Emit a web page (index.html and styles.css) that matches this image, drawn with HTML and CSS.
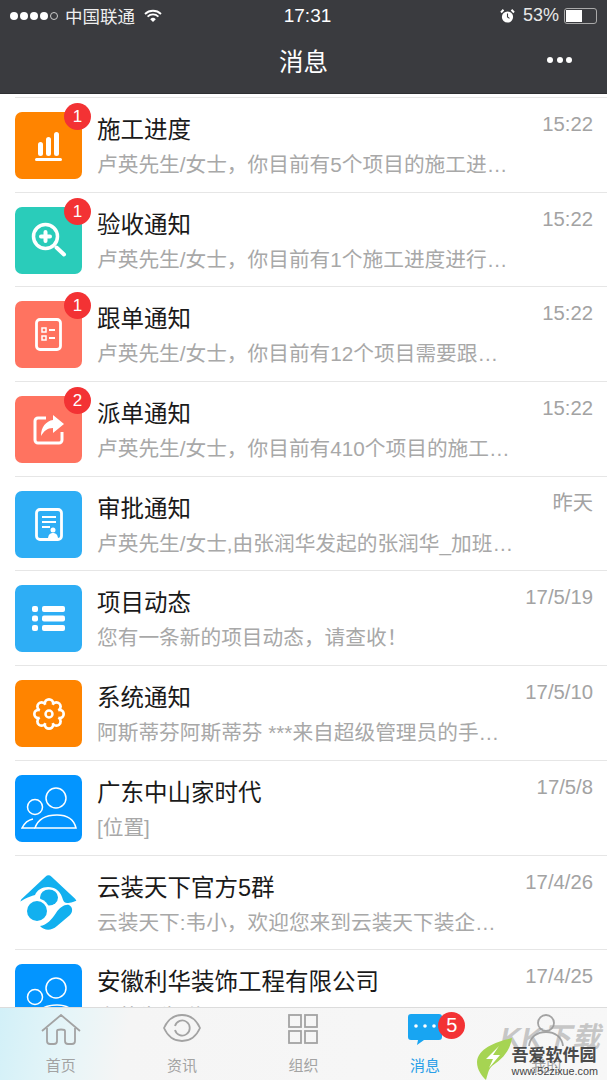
FILE: index.html
```html
<!DOCTYPE html>
<html lang="zh">
<head>
<meta charset="UTF-8">
<meta name="viewport" content="width=device-width, initial-scale=1.0">
<title>消息</title>
<link rel="stylesheet" href="styles.css">
</head>
<body>
<div class="app">
  <div class="top">
    <div class="status">
      <div class="status-left">
        <span class="signal"><i></i><i></i><i></i><i></i><i class="off"></i></span>
        <span class="carrier">中国联通</span>
        <svg class="wifi" width="18" height="14" viewBox="0 0 18 14"><path d="M1 5a11.500 11.500 0 0 1 16 0" fill="none" stroke="#fff" stroke-width="1.800"/><path d="M3.600 7.600a7.800 7.800 0 0 1 10.800 0" fill="none" stroke="#fff" stroke-width="1.800"/><path d="M6.200 10.200a4 4 0 0 1 5.600 0L9 13z" fill="#fff"/></svg>
      </div>
      <div class="clock">17:31</div>
      <div class="status-right">
        <svg width="15" height="16" viewBox="0 0 15 16"><circle cx="7.500" cy="9" r="5.600" fill="#fff"/><path d="M7.500 5.500V9l2 1.400" fill="none" stroke="#3a3b3f" stroke-width="1.100"/><path d="M1 4.500 3.500 1.800M14 4.500l-2.500-2.700" stroke="#fff" stroke-width="2"/></svg>
        <span class="pct">53%</span>
        <span class="battery"><span class="battery-fill"></span></span>
      </div>
    </div>
    <div class="nav">
      <span class="nav-title">消息</span>
      <span class="nav-more"><i></i><i></i><i></i></span>
    </div>
  </div>
  <div class="list">
    <div class="row">
      <div class="thumb orange">
        <svg width="28" height="30" viewBox="0 0 28 30" fill="#fff"><rect x="3" y="11" width="5" height="14" rx="2.500"/><rect x="11" y="6" width="5" height="19" rx="2.500"/><rect x="19" y="1" width="5" height="24" rx="2.500"/><rect x="0" y="27" width="27" height="3" rx="1.500"/></svg>
        <span class="badge">1</span>
      </div>
      <div class="body">
        <div class="line"><span class="name">施工进度</span><span class="time">15:22</span></div>
        <div class="desc">卢英先生/女士，你目前有5个项目的施工进…</div>
      </div>
    </div>
    <div class="row">
      <div class="thumb teal">
        <svg width="36" height="36" viewBox="0 0 36 36" fill="none" stroke="#fff" stroke-linecap="round"><circle cx="14.500" cy="14.500" r="12" stroke-width="3.500"/><path d="M25.500 25.500l7.500 7" stroke-width="4"/><path d="M14.500 10v9M10 14.500h9" stroke-width="4"/></svg>
        <span class="badge">1</span>
      </div>
      <div class="body">
        <div class="line"><span class="name">验收通知</span><span class="time">15:22</span></div>
        <div class="desc">卢英先生/女士，你目前有1个施工进度进行…</div>
      </div>
    </div>
    <div class="row">
      <div class="thumb coral">
        <svg width="27" height="33" viewBox="0 0 27 33" fill="none" stroke="#fff"><rect x="1.500" y="1.500" width="24" height="30" rx="3.500" stroke-width="2.800"/><rect x="7" y="10" width="4" height="4" stroke-width="1.500"/><rect x="7" y="18" width="4" height="4" stroke-width="1.500"/><path d="M14 12h6M14 20h6" stroke-width="1.800"/></svg>
        <span class="badge">1</span>
      </div>
      <div class="body">
        <div class="line"><span class="name">跟单通知</span><span class="time">15:22</span></div>
        <div class="desc">卢英先生/女士，你目前有12个项目需要跟…</div>
      </div>
    </div>
    <div class="row">
      <div class="thumb coral">
        <svg width="32" height="31" viewBox="0 0 32 31"><path d="M13 4H5a3 3 0 0 0-3 3v19a3 3 0 0 0 3 3h21a3 3 0 0 0 3-3v-8" fill="none" stroke="#fff" stroke-width="3"/><path d="M20 1l11 9-11 9v-5c-6 0-9 3-12 8 0-9 5-15 12-16z" fill="#fff"/></svg>
        <span class="badge">2</span>
      </div>
      <div class="body">
        <div class="line"><span class="name">派单通知</span><span class="time">15:22</span></div>
        <div class="desc">卢英先生/女士，你目前有410个项目的施工…</div>
      </div>
    </div>
    <div class="row">
      <div class="thumb sky">
        <svg width="28" height="33" viewBox="0 0 28 33" fill="none" stroke="#fff"><rect x="1.500" y="1.500" width="25" height="30" rx="3.500" stroke-width="2.800"/><path d="M7 9h14M7 14h14M7 19h8" stroke-width="1.800"/><circle cx="18" cy="22" r="2.500" fill="#fff" stroke="none"/><path d="M13 31c0-4 2-6 5-6s5 2 5 6z" fill="#fff" stroke="none"/></svg>
      </div>
      <div class="body">
        <div class="line"><span class="name">审批通知</span><span class="time">昨天</span></div>
        <div class="desc">卢英先生/女士,由张润华发起的张润华_加班…</div>
      </div>
    </div>
    <div class="row">
      <div class="thumb sky">
        <svg width="33" height="25" viewBox="0 0 33 25" fill="#fff"><rect x="0" y="0" width="6" height="6" rx="2"/><rect x="0" y="9.500" width="6" height="6" rx="2"/><rect x="0" y="19" width="6" height="6" rx="2"/><rect x="10" y="0" width="23" height="6" rx="2"/><rect x="10" y="9.500" width="23" height="6" rx="2"/><rect x="10" y="19" width="23" height="6" rx="2"/></svg>
      </div>
      <div class="body">
        <div class="line"><span class="name">项目动态</span><span class="time">17/5/19</span></div>
        <div class="desc">您有一条新的项目动态，请查收！</div>
      </div>
    </div>
    <div class="row">
      <div class="thumb orange">
        <svg width="32" height="32" viewBox="0 0 32 32">
          <g fill="#fff"><circle cx="16" cy="16" r="11"/><circle cx="16" cy="5.500" r="5.500"/><circle cx="23.400" cy="8.600" r="5.500"/><circle cx="26.500" cy="16" r="5.500"/><circle cx="23.400" cy="23.400" r="5.500"/><circle cx="16" cy="26.500" r="5.500"/><circle cx="8.600" cy="23.400" r="5.500"/><circle cx="5.500" cy="16" r="5.500"/><circle cx="8.600" cy="8.600" r="5.500"/></g>
          <g fill="#ff8400"><circle cx="16" cy="16" r="10"/><circle cx="16" cy="5.500" r="2.800"/><circle cx="23.400" cy="8.600" r="2.800"/><circle cx="26.500" cy="16" r="2.800"/><circle cx="23.400" cy="23.400" r="2.800"/><circle cx="16" cy="26.500" r="2.800"/><circle cx="8.600" cy="23.400" r="2.800"/><circle cx="5.500" cy="16" r="2.800"/><circle cx="8.600" cy="8.600" r="2.800"/></g>
          <circle cx="16" cy="16" r="3.500" fill="none" stroke="#fff" stroke-width="2.500"/>
        </svg>
      </div>
      <div class="body">
        <div class="line"><span class="name">系统通知</span><span class="time">17/5/10</span></div>
        <div class="desc">阿斯蒂芬阿斯蒂芬 ***来自超级管理员的手…</div>
      </div>
    </div>
    <div class="row">
      <div class="thumb blue">
        <svg width="56" height="42" viewBox="0 0 56 42" fill="none" stroke="#fff" stroke-width="1.500"><circle cx="35" cy="11" r="10"/><circle cx="14" cy="20" r="7.500"/><path d="M14 41c3-9 11-13 22-13s17 5 19 13z"/><path d="M12 32c-5 1-9 5-11 9h13"/></svg>
      </div>
      <div class="body">
        <div class="line"><span class="name">广东中山家时代</span><span class="time">17/5/8</span></div>
        <div class="desc">[位置]</div>
      </div>
    </div>
    <div class="row">
      <div class="thumb logo">
        <svg width="67" height="67" viewBox="0 0 67 67">
          <path d="M33.500 10 57 32 33.500 55 10 32z" fill="#12b0ef" stroke="#12b0ef" stroke-width="9" stroke-linejoin="round"/>
          <path d="M0 36C6 30 13 27 20 25 22 20 27 17 33 17 40 17 45 21 47 27 48 30 49 33 52 33 55 33 60 32 67 28V67H0z" fill="#fff"/>
          <ellipse cx="34" cy="27.500" rx="9" ry="8" fill="#12b0ef"/>
          <circle cx="22" cy="41" r="12.500" fill="#fff"/>
          <path d="M24 57C32 55 37 49 40 44 42 41 44 38 47 34L60 36V48H30z" fill="#fff"/>
          <circle cx="22" cy="41" r="10" fill="#12b0ef"/>
          <path d="M25 56C32 55 37 49 41 43 45 37 50 34 54 35 58 37 58 42 55 45L42 56C36 61 30 61 25 56z" fill="#12b0ef"/>
        </svg>
      </div>
      <div class="body">
        <div class="line"><span class="name">云装天下官方5群</span><span class="time">17/4/26</span></div>
        <div class="desc">云装天下:韦小，欢迎您来到云装天下装企…</div>
      </div>
    </div>
    <div class="row">
      <div class="thumb blue">
        <svg width="56" height="42" viewBox="0 0 56 42" fill="none" stroke="#fff" stroke-width="1.500"><circle cx="35" cy="11" r="10"/><circle cx="14" cy="20" r="7.500"/><path d="M14 41c3-9 11-13 22-13s17 5 19 13z"/><path d="M12 32c-5 1-9 5-11 9h13"/></svg>
      </div>
      <div class="body">
        <div class="line"><span class="name">安徽利华装饰工程有限公司</span><span class="time">17/4/25</span></div>
        <div class="desc">卢英先生[位置]</div>
      </div>
    </div>
  </div>
  <div class="tabs">
    <div class="tab">
      <svg width="40" height="32" viewBox="0 0 40 32" fill="none" stroke="#a3a3a3" stroke-width="1.800"><path d="M1 17 20 1l19 16"/><path d="M6 14v13c0 2 1 3 3 3h4c2 0 3-1 3-3V17c0-2 8-2 8 0v10c0 2 1 3 3 3h4c2 0 3-1 3-3V14"/></svg>
      <span>首页</span>
    </div>
    <div class="tab">
      <svg width="38" height="28" viewBox="0 0 38 28" fill="none" stroke="#a3a3a3" stroke-width="1.800"><path d="M1 14C5 5 12 1 19 1s14 4 18 13c-4 9-11 13-18 13S5 23 1 14z"/><path d="M12 12a7.500 7.500 0 1 1 0 4"/></svg>
      <span>资讯</span>
    </div>
    <div class="tab">
      <svg width="30" height="30" viewBox="0 0 30 30" fill="none" stroke="#a3a3a3" stroke-width="1.800"><rect x="1" y="1" width="12" height="12"/><rect x="17" y="1" width="12" height="12"/><rect x="1" y="17" width="12" height="12"/><rect x="17" y="17" width="12" height="12"/></svg>
      <span>组织</span>
    </div>
    <div class="tab active">
      <svg width="34" height="31" viewBox="0 0 34 31"><path d="M3 0h28a3 3 0 0 1 3 3v20a3 3 0 0 1-3 3H16l-7 5 1-5H3a3 3 0 0 1-3-3V3a3 3 0 0 1 3-3z" fill="#18a5f2"/><circle cx="8" cy="12" r="1.800" fill="#fff"/><circle cx="17" cy="12" r="1.800" fill="#fff"/><circle cx="26" cy="12" r="1.800" fill="#fff"/></svg>
      <span>消息</span>
      <em class="tab-badge">5</em>
    </div>
    <div class="tab">
      <svg width="38" height="32" viewBox="0 0 38 32" fill="none" stroke="#a3a3a3" stroke-width="1.800"><circle cx="19" cy="9" r="8"/><path d="M2 32c1-9 8-14 17-14s16 5 17 14"/></svg>
      <span>我的</span>
    </div>
  </div>
  <span class="mark-back">KK下载</span>
  <div class="mark">
    <svg class="mark-leaf" width="36" height="42" viewBox="0 0 36 42"><path d="M36 0C20 4 2 10 1 24c0 8 5 14 9 18 2-6 2-10 6-14C28 20 34 12 36 0z" fill="#a6d452"/><path d="M23 8 10 21h7l-4 9 11-13h-7z" fill="#fff"/></svg>
    <div class="mark-text">
      <b>吾爱软件园</b>
      <span>www.52zixue.com</span>
    </div>
  </div>
</div>
</body>
</html>
```

FILE: styles.css
```css
* {
  box-sizing: border-box;
}
html, body {
  margin: 0;
  padding: 0;
}
body {
  font-family: "Liberation Sans", "Noto Sans CJK SC", sans-serif;
  background-color: #fff;
}
.app {
  position: relative;
  width: 607px;
  height: 1080px;
  display: flex;
  flex-direction: column;
  overflow: hidden;
}

/* top bar */
.top {
  height: 94px;
  flex: none;
  background-color: #3a3b3f;
  color: #fff;
  border-bottom: 1px solid #2e2f32;
}
.status {
  height: 31px;
  display: grid;
  grid-template-columns: 1fr auto 1fr;
  align-items: center;
  padding: 0 9px 0 10px;
}
.status-left {
  display: flex;
  align-items: center;
}
.signal {
  display: flex;
  gap: 2px;
  margin-right: 7px;
}
.signal i {
  width: 8px;
  height: 8px;
  border-radius: 50%;
  background-color: #fff;
}
.signal i.off {
  background: none;
  border: 1px solid #ccc;
}
.carrier {
  font-size: 17.500px;
  color: #eee;
}
.wifi {
  margin-left: 9px;
}
.clock {
  font-size: 19px;
  margin-left: 7px;
}
.status-right {
  display: flex;
  align-items: center;
  justify-content: flex-end;
}
.pct {
  font-size: 18px;
  margin-left: 8px;
  margin-right: 5px;
  color: #e8e8e8;
}
.battery {
  width: 33px;
  height: 16px;
  border: 1px solid #aaa;
  border-radius: 3px;
  padding: 1px;
  margin-right: 1px;
}
.battery-fill {
  display: block;
  width: 55%;
  height: 100%;
  background-color: #fff;
}
.nav {
  position: relative;
  height: 62px;
  display: flex;
  align-items: center;
  justify-content: center;
}
.nav-title {
  font-size: 24.500px;
  margin-top: -4px;
}
.nav-more {
  position: absolute;
  right: 35px;
  top: 26px;
  display: flex;
  gap: 3.500px;
}
.nav-more i {
  width: 6px;
  height: 6px;
  border-radius: 50%;
  background-color: #fff;
}

/* message list */
.list {
  flex: 1;
  min-height: 0;
  overflow: hidden;
  padding-top: 3px;
  background-color: #fff;
}
.row {
  height: 94.700px;
  margin-left: 15px;
  padding-top: 14px;
  display: flex;
  gap: 15px;
  border-top: 1.500px solid #e6e6e6;
}
.thumb {
  position: relative;
  width: 67px;
  height: 67px;
  flex: none;
  border-radius: 7px;
  display: flex;
  align-items: center;
  justify-content: center;
}
.orange {
  background-color: #ff8400;
}
.teal {
  background-color: #2accba;
}
.coral {
  background-color: #ff7360;
}
.sky {
  background-color: #2eaef5;
}
.blue {
  background-color: #0395ff;
}
.logo {
  background: none;
}
.badge {
  position: absolute;
  right: -9px;
  top: -9px;
  width: 27px;
  height: 27px;
  border-radius: 50%;
  background-color: #f33234;
  color: #fff;
  font-size: 17px;
  line-height: 27px;
  text-align: center;
}
.body {
  flex: 1;
  min-width: 0;
  padding-right: 14px;
}
.line {
  display: flex;
  justify-content: space-between;
  align-items: flex-start;
  height: 35px;
}
.name {
  font-size: 23.500px;
  line-height: 37px;
  color: #1a1a1a;
  white-space: nowrap;
}
.time {
  font-size: 20.300px;
  line-height: 24px;
  color: #a3a3a3;
}
.desc {
  font-size: 20.700px;
  line-height: 36px;
  color: #a8a8a8;
  white-space: nowrap;
  overflow: hidden;
}

/* bottom tabs */
.tabs {
  height: 73px;
  flex: none;
  display: grid;
  grid-template-columns: repeat(5, 1fr);
  background: linear-gradient(100deg, #d2f0f8 0, #e6f5f8 70px, #f5f5f5 130px, #f7f7f7 100%);
  border-top: 1.500px solid #dcdcdc;
}
.tab {
  position: relative;
  height: 71px;
  padding-top: 6px;
  display: flex;
  flex-direction: column;
  align-items: center;
  justify-content: space-between;
  padding-bottom: 4px;
  font-size: 15px;
  color: #a3a3a3;
}
.tab.active {
  color: #2a9fe8;
}
.tab-badge {
  position: absolute;
  left: 74px;
  top: 4px;
  width: 27px;
  height: 27px;
  border-radius: 50%;
  background-color: #f33234;
  color: #fff;
  font-style: normal;
  font-size: 20px;
  line-height: 27px;
  text-align: center;
}

/* watermark over the corner */
.mark-back {
  position: absolute;
  right: 6px;
  bottom: 29px;
  font-size: 28px;
  line-height: 26px;
  font-weight: bold;
  font-style: italic;
  letter-spacing: 1px;
  color: rgba(150, 150, 150, 0.5);
}
.mark {
  position: absolute;
  right: 9px;
  bottom: 0;
  display: flex;
  align-items: flex-end;
}
.mark-text {
  display: flex;
  flex-direction: column;
  margin-bottom: 2px;
}
.mark-text b {
  font-size: 17px;
  line-height: 16px;
  color: #4a4a4a;
}
.mark-text span {
  font-size: 10.800px;
  line-height: 14px;
  color: #444;
}
```
